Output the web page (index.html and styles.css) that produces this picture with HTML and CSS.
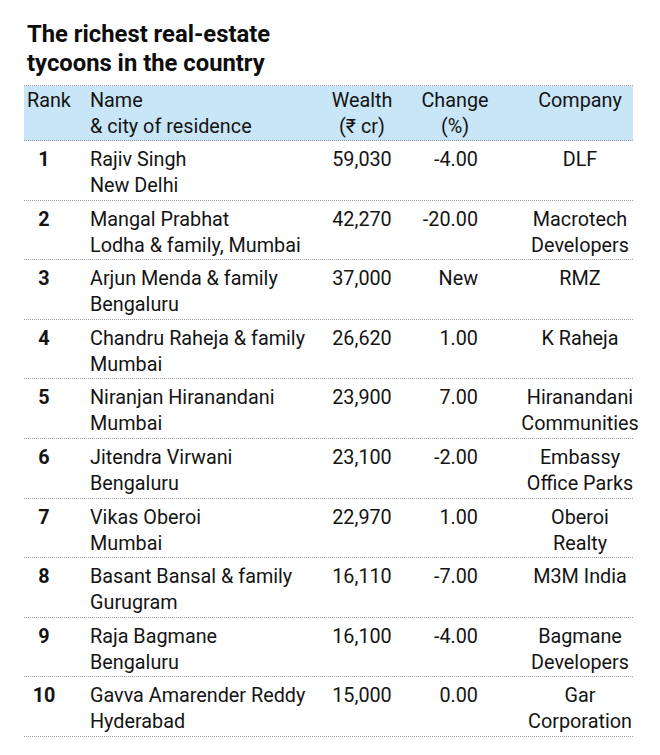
FILE: index.html
```html
<!DOCTYPE html>
<html>
<head>
<meta charset="utf-8">
<link rel="stylesheet" href="styles.css">
</head>
<body>
<div class="page">
  <h1 class="title">The richest real-estate<br>tycoons in the country</h1>
  <div class="table">
    <div class="row head">
      <div class="c rank">Rank</div>
      <div class="c name">Name<br>&amp; city of residence</div>
      <div class="c wealth">Wealth<br>(₹ cr)</div>
      <div class="c change hc">Change<br>(%)</div>
      <div class="c company">Company</div>
    </div>
    <div class="row"><div class="c rank num">1</div><div class="c name">Rajiv Singh<br>New Delhi</div><div class="c wealth">59,030</div><div class="c change">-4.00</div><div class="c company">DLF</div></div>
    <div class="row"><div class="c rank num">2</div><div class="c name">Mangal Prabhat<br>Lodha &amp; family, Mumbai</div><div class="c wealth">42,270</div><div class="c change">-20.00</div><div class="c company">Macrotech<br>Developers</div></div>
    <div class="row"><div class="c rank num">3</div><div class="c name">Arjun Menda &amp; family<br>Bengaluru</div><div class="c wealth">37,000</div><div class="c change">New</div><div class="c company">RMZ</div></div>
    <div class="row"><div class="c rank num">4</div><div class="c name">Chandru Raheja &amp; family<br>Mumbai</div><div class="c wealth">26,620</div><div class="c change">1.00</div><div class="c company">K Raheja</div></div>
    <div class="row"><div class="c rank num">5</div><div class="c name">Niranjan Hiranandani<br>Mumbai</div><div class="c wealth">23,900</div><div class="c change">7.00</div><div class="c company">Hiranandani<br>Communities</div></div>
    <div class="row"><div class="c rank num">6</div><div class="c name">Jitendra Virwani<br>Bengaluru</div><div class="c wealth">23,100</div><div class="c change">-2.00</div><div class="c company">Embassy<br>Office Parks</div></div>
    <div class="row"><div class="c rank num">7</div><div class="c name">Vikas Oberoi<br>Mumbai</div><div class="c wealth">22,970</div><div class="c change">1.00</div><div class="c company">Oberoi<br>Realty</div></div>
    <div class="row"><div class="c rank num">8</div><div class="c name">Basant Bansal &amp; family<br>Gurugram</div><div class="c wealth">16,110</div><div class="c change">-7.00</div><div class="c company">M3M India</div></div>
    <div class="row"><div class="c rank num">9</div><div class="c name">Raja Bagmane<br>Bengaluru</div><div class="c wealth">16,100</div><div class="c change">-4.00</div><div class="c company">Bagmane<br>Developers</div></div>
    <div class="row"><div class="c rank num">10</div><div class="c name">Gavva Amarender Reddy<br>Hyderabad</div><div class="c wealth">15,000</div><div class="c change">0.00</div><div class="c company">Gar<br>Corporation</div></div>
  </div>
</div>
</body>
</html>
```
FILE: styles.css
```css
html, body {
  margin: 0;
  padding: 0;
  background: #ffffff;
}
.page {
  padding: 20px 0 0 24px;
  font-family: Roboto, "Noto Sans", sans-serif;
  color: #141414;
}
.title {
  margin: 0 0 7px 3px;
  font-size: 23.8px;
  line-height: 29px;
  font-weight: 700;
  color: #0d0d0d;
}
.table {
  width: 609px;
  border-top: 1px dotted #9a9a9a;
}
.row {
  display: grid;
  grid-template-columns: 64px 240px 68px 118px 132px;
  width: 609px;
  font-size: 19.8px;
  line-height: 26px;
  padding: 6px 0 0 0;
  border-bottom: 1px dotted #9a9a9a;
  box-sizing: border-box;
  height: 59.6px;
}
.row.head {
  background: #c8e6f8;
  height: 55px;
  padding: 2px 0 0 0;
}
.c {
  white-space: nowrap;
  min-width: 0;
}
.rank {
  padding-left: 3px;
}
.rank.num {
  padding-left: 0;
  width: 40px;
  text-align: center;
  font-weight: 700;
}
.name {
  padding-left: 2px;
}
.wealth {
  text-align: center;
}
.change {
  text-align: right;
  padding-right: 36px;
}
.change.hc {
  text-align: center;
  padding-right: 0;
}
.company {
  text-align: center;
}
```
